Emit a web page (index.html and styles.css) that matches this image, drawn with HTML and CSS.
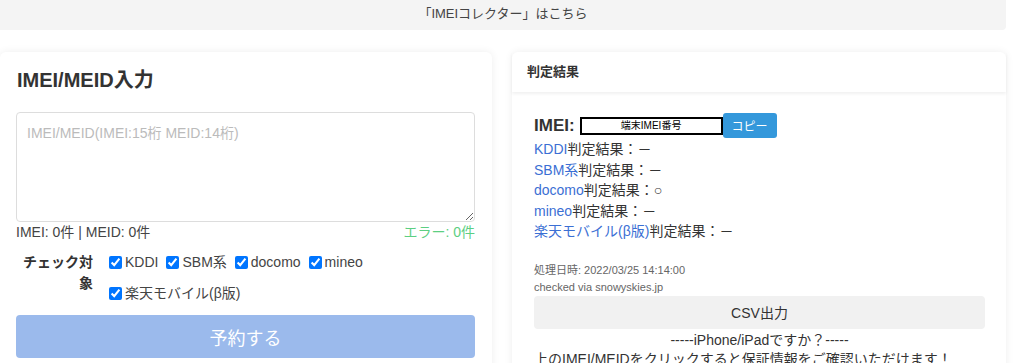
FILE: index.html
```html
<!DOCTYPE html>
<html lang="ja">
<head>
    <meta charset="UTF-8">
    <meta name="viewport" content="width=device-width, initial-scale=1.0">
    <title>IMEI/MEID判定</title>
    <link rel="stylesheet" href="styles.css">
</head>
<body>
    <div class="page">
        <div class="banner">「IMEIコレクター」はこちら</div>

        <div class="main">
            <div class="card input-card">
                <h2 class="title">IMEI/MEID入力</h2>
                <textarea class="imei-input" placeholder="IMEI/MEID(IMEI:15桁 MEID:14桁)"></textarea>
                <div class="counts">
                    <span>IMEI: 0件 | MEID: 0件</span>
                    <span class="error">エラー: 0件</span>
                </div>
                <div class="targets">
                    <div class="targets-label">チェック対象</div>
                    <div class="targets-list">
                        <label class="opt"><input type="checkbox" checked>KDDI</label>
                        <label class="opt"><input type="checkbox" checked>SBM系</label>
                        <label class="opt"><input type="checkbox" checked>docomo</label>
                        <label class="opt"><input type="checkbox" checked>mineo</label>
                        <label class="opt"><input type="checkbox" checked>楽天モバイル(β版)</label>
                    </div>
                </div>
                <button class="submit-btn">予約する</button>
            </div>

            <div class="card result-card">
                <div class="result-header">判定結果</div>
                <div class="result-body">
                    <div class="imei-row">
                        <span class="imei-label">IMEI:</span>
                        <span class="imei-box">端末IMEI番号</span>
                        <button class="copy-btn">コピー</button>
                    </div>
                    <div class="result-line"><a href="#">KDDI</a>判定結果：－</div>
                    <div class="result-line"><a href="#">SBM系</a>判定結果：－</div>
                    <div class="result-line"><a href="#">docomo</a>判定結果：○</div>
                    <div class="result-line"><a href="#">mineo</a>判定結果：－</div>
                    <div class="result-line"><a href="#">楽天モバイル(β版)</a>判定結果：－</div>

                    <div class="meta">処理日時: 2022/03/25 14:14:00</div>
                    <div class="meta">checked via snowyskies.jp</div>
                    <button class="csv-btn">CSV出力</button>
                    <div class="iphone">-----iPhone/iPadですか？-----</div>
                    <div class="note">上のIMEI/MEIDをクリックすると保証情報をご確認いただけます！</div>
                </div>
            </div>
        </div>
    </div>
</body>
</html>
```

FILE: styles.css
```css
body {
    margin: 0;
    font-family: "Liberation Sans", Arial, "Noto Sans CJK JP", sans-serif;
    color: #333;
    background-color: #ffffff;
    overflow: hidden;
    text-spacing-trim: space-all;
}
.page {
    width: 1006px;
}
.banner {
    height: 30px;
    line-height: 27px;
    background-color: #f4f4f4;
    border-radius: 0 0 4px 0;
    text-align: center;
    font-size: 13px;
    color: #444;
}
.main {
    display: flex;
    gap: 20px;
    margin-top: 22px;
    align-items: flex-start;
}
.card {
    background-color: #ffffff;
    border-radius: 6px;
    box-shadow: 0 0 8px rgba(0, 0, 0, 0.07);
    height: 340px;
    min-width: 0;
}

/* 入力 */
.input-card {
    flex: 0 0 492px;
    padding: 16px 17px 0 16px;
    box-sizing: border-box;
}
.title {
    margin: 0 0 20px 1px;
    font-size: 20px;
    line-height: 24px;
    font-weight: bold;
    color: #333;
}
.imei-input {
    display: block;
    width: 100%;
    height: 110px;
    box-sizing: border-box;
    padding: 10px;
    border: 1px solid #ddd;
    border-radius: 4px;
    font-family: inherit;
    font-size: 14px;
    line-height: 20px;
    resize: vertical;
}
.imei-input::placeholder {
    color: #bbb;
}
.counts {
    display: flex;
    justify-content: space-between;
    font-size: 14px;
    line-height: 20px;
    color: #444;
}
.error {
    color: #5ccf82;
}
.targets {
    display: flex;
    margin-top: 10px;
}
.targets-label {
    width: 73px;
    padding-left: 4px;
    text-align: right;
    font-weight: bold;
    font-size: 14px;
    line-height: 21px;
    color: #333;
}
.targets-list {
    flex: 1;
    display: flex;
    flex-wrap: wrap;
    row-gap: 10px;
    column-gap: 8px;
    padding-left: 16px;
}
.opt {
    display: flex;
    align-items: center;
    font-size: 14px;
    line-height: 21px;
    color: #444;
}
.opt input {
    margin: 0 3px 0 0;
    width: 13px;
    height: 13px;
}
.submit-btn {
    display: block;
    width: 100%;
    height: 43px;
    margin-top: 11px;
    border: none;
    border-radius: 4px;
    background-color: #9bbaec;
    color: #ffffff;
    font-family: inherit;
    font-size: 18px;
}

/* 判定結果 */
.result-card {
    flex: 1;
}
.result-header {
    height: 40px;
    line-height: 40px;
    padding-left: 15px;
    font-size: 13px;
    font-weight: bold;
    color: #333;
    box-shadow: 0 2px 3px rgba(0, 0, 0, 0.06);
}
.result-body {
    padding: 21px 21px 0 22px;
}
.imei-row {
    display: flex;
    align-items: center;
    height: 25px;
}
.imei-label {
    font-size: 17px;
    font-weight: bold;
    color: #333;
    margin-right: 5px;
}
.imei-box {
    width: 139px;
    height: 14px;
    border: 2px solid #000;
    font-size: 10px;
    line-height: 14px;
    text-align: center;
    color: #000;
}
.copy-btn {
    width: 54px;
    height: 25px;
    border: none;
    border-radius: 3px;
    background-color: #3498db;
    color: #fff;
    font-family: inherit;
    font-size: 12px;
    padding: 0;
}
.result-line {
    font-size: 14px;
    line-height: 20.5px;
    color: #333;
}
.result-line a {
    color: #3b6fd4;
    text-decoration: none;
}
.result-line:nth-of-type(2) {
    margin-top: 1px;
}
.meta {
    font-size: 11px;
    line-height: 17px;
    color: #666;
}
.result-line + .meta {
    margin-top: 20px;
}
.csv-btn {
    display: block;
    width: 100%;
    height: 33px;
    margin-top: 0;
    border: none;
    border-radius: 4px;
    background-color: #f1f1f1;
    color: #333;
    font-family: inherit;
    font-size: 14px;
}
.iphone {
    text-align: center;
    font-size: 14px;
    line-height: 20px;
    margin-top: 1px;
}
.note {
    font-size: 14px;
    line-height: 19px;
}
```
